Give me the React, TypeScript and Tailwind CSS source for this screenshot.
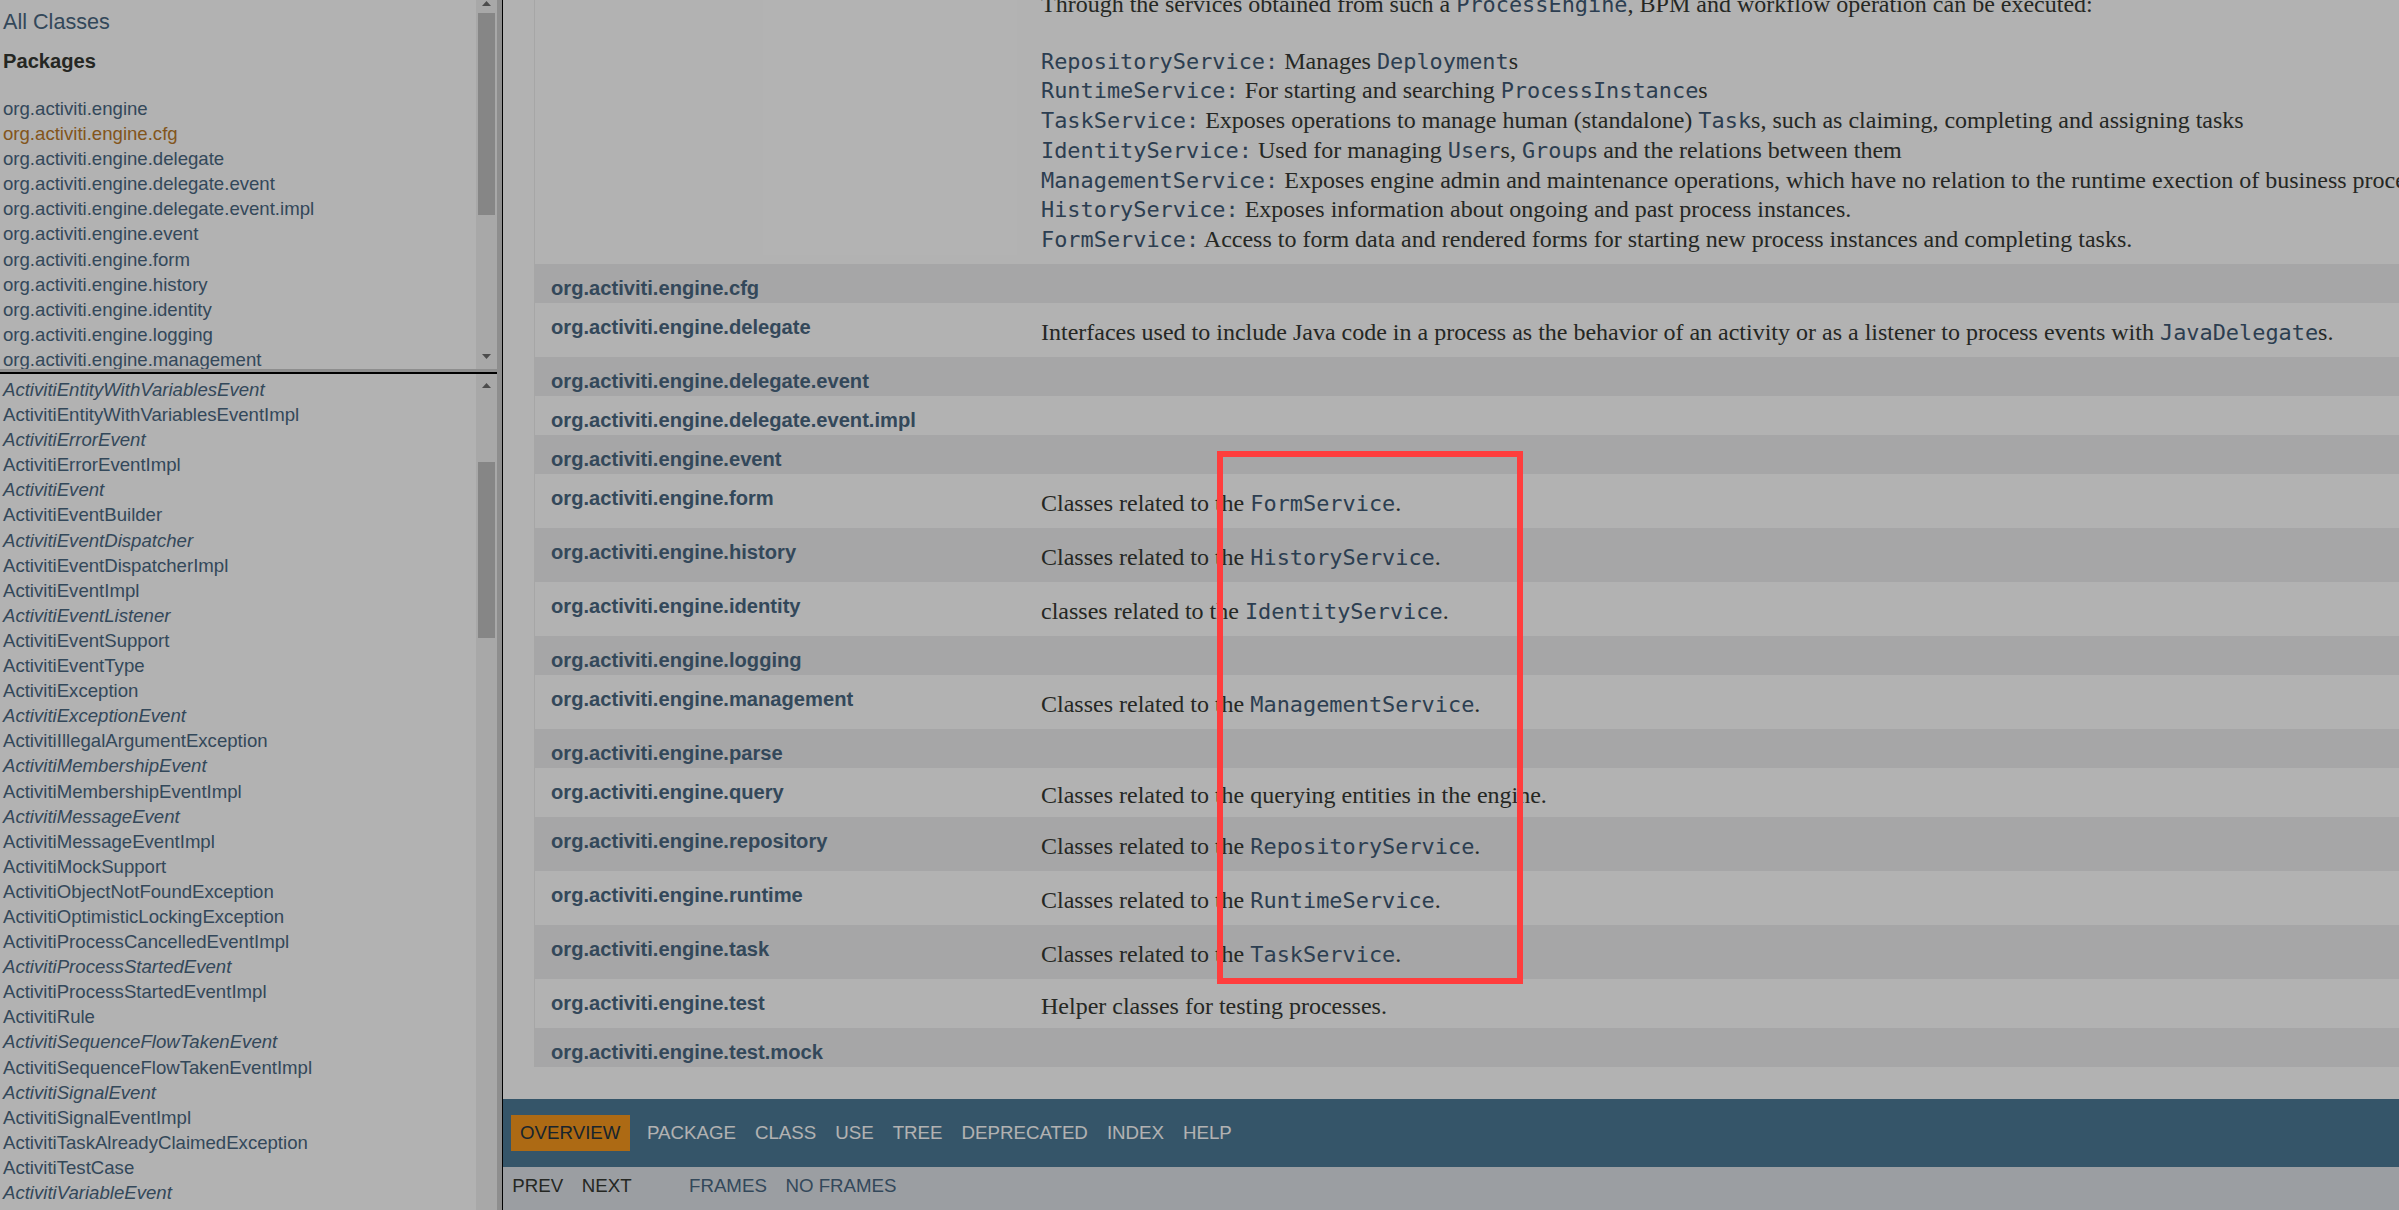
import type { ReactNode } from 'react';

const SANS = "font-['Liberation_Sans',Arial,sans-serif]";
const SERIF = "font-['Liberation_Serif','Times_New_Roman',serif]";

const packages = [
    'org.activiti.engine',
    'org.activiti.engine.cfg',
    'org.activiti.engine.delegate',
    'org.activiti.engine.delegate.event',
    'org.activiti.engine.delegate.event.impl',
    'org.activiti.engine.event',
    'org.activiti.engine.form',
    'org.activiti.engine.history',
    'org.activiti.engine.identity',
    'org.activiti.engine.logging',
    'org.activiti.engine.management',
];

// [name, isInterface]
const classes: [string, boolean][] = [
    ['ActivitiEntityWithVariablesEvent', true],
    ['ActivitiEntityWithVariablesEventImpl', false],
    ['ActivitiErrorEvent', true],
    ['ActivitiErrorEventImpl', false],
    ['ActivitiEvent', true],
    ['ActivitiEventBuilder', false],
    ['ActivitiEventDispatcher', true],
    ['ActivitiEventDispatcherImpl', false],
    ['ActivitiEventImpl', false],
    ['ActivitiEventListener', true],
    ['ActivitiEventSupport', false],
    ['ActivitiEventType', false],
    ['ActivitiException', false],
    ['ActivitiExceptionEvent', true],
    ['ActivitiIllegalArgumentException', false],
    ['ActivitiMembershipEvent', true],
    ['ActivitiMembershipEventImpl', false],
    ['ActivitiMessageEvent', true],
    ['ActivitiMessageEventImpl', false],
    ['ActivitiMockSupport', false],
    ['ActivitiObjectNotFoundException', false],
    ['ActivitiOptimisticLockingException', false],
    ['ActivitiProcessCancelledEventImpl', false],
    ['ActivitiProcessStartedEvent', true],
    ['ActivitiProcessStartedEventImpl', false],
    ['ActivitiRule', false],
    ['ActivitiSequenceFlowTakenEvent', true],
    ['ActivitiSequenceFlowTakenEventImpl', false],
    ['ActivitiSignalEvent', true],
    ['ActivitiSignalEventImpl', false],
    ['ActivitiTaskAlreadyClaimedException', false],
    ['ActivitiTestCase', false],
    ['ActivitiVariableEvent', true],
];

function Code({ children }: { children: ReactNode }) {
    return (
        <code className="font-['DejaVu_Sans_Mono','Liberation_Mono',monospace] text-[21.9px] leading-none text-[#3f5a74]">
            {children}
        </code>
    );
}

type RowKind = 'empty' | 'plain' | 'code';
type Row = { name: string; kind: RowKind; desc?: ReactNode };

const rowHeight: Record<RowKind, string> = {
    empty: 'h-[39px]',
    plain: 'h-[49px]',
    code: 'h-[54px]',
};

const descPad: Record<RowKind, string> = {
    empty: '',
    plain: 'pt-[12.6px]',
    code: 'pt-[14.8px]',
};

const rows: Row[] = [
    { name: 'org.activiti.engine.cfg', kind: 'empty' },
    {
        name: 'org.activiti.engine.delegate',
        kind: 'code',
        desc: <>Interfaces used to include Java code in a process as the behavior of an activity or as a listener to process events with <Code>JavaDelegate</Code>s.</>,
    },
    { name: 'org.activiti.engine.delegate.event', kind: 'empty' },
    { name: 'org.activiti.engine.delegate.event.impl', kind: 'empty' },
    { name: 'org.activiti.engine.event', kind: 'empty' },
    { name: 'org.activiti.engine.form', kind: 'code', desc: <>Classes related to the <Code>FormService</Code>.</> },
    { name: 'org.activiti.engine.history', kind: 'code', desc: <>Classes related to the <Code>HistoryService</Code>.</> },
    { name: 'org.activiti.engine.identity', kind: 'code', desc: <>classes related to the <Code>IdentityService</Code>.</> },
    { name: 'org.activiti.engine.logging', kind: 'empty' },
    { name: 'org.activiti.engine.management', kind: 'code', desc: <>Classes related to the <Code>ManagementService</Code>.</> },
    { name: 'org.activiti.engine.parse', kind: 'empty' },
    { name: 'org.activiti.engine.query', kind: 'plain', desc: <>Classes related to the querying entities in the engine.</> },
    { name: 'org.activiti.engine.repository', kind: 'code', desc: <>Classes related to the <Code>RepositoryService</Code>.</> },
    { name: 'org.activiti.engine.runtime', kind: 'code', desc: <>Classes related to the <Code>RuntimeService</Code>.</> },
    { name: 'org.activiti.engine.task', kind: 'code', desc: <>Classes related to the <Code>TaskService</Code>.</> },
    { name: 'org.activiti.engine.test', kind: 'plain', desc: <>Helper classes for testing processes.</> },
    { name: 'org.activiti.engine.test.mock', kind: 'empty' },
];

function Arrow({ up }: { up: boolean }) {
    return (
        <svg width="9" height="5" viewBox="0 0 9 5" className="block">
            <polygon points={up ? '0,5 4.5,0 9,5' : '0,0 9,0 4.5,5'} fill="#6e6e6e" />
        </svg>
    );
}

function TopScrollbar() {
    return (
        <div className="w-[21px] flex-none bg-[#f1f1f1] flex flex-col">
            <div className="h-[13px] flex justify-center pt-[1px]">
                <Arrow up />
            </div>
            <div className="mx-[2px] h-[202px] bg-[#c1c1c1]" />
            <div className="flex-1" />
            <div className="h-[16px] flex justify-center pt-[1px]">
                <Arrow up={false} />
            </div>
        </div>
    );
}

function BottomScrollbar() {
    return (
        <div className="w-[21px] flex-none bg-[#f1f1f1] flex flex-col">
            <div className="h-[21px] flex justify-center pt-[9px]">
                <Arrow up />
            </div>
            <div className="h-[67px]" />
            <div className="mx-[2px] h-[176px] bg-[#c1c1c1]" />
            <div className="flex-1" />
        </div>
    );
}

const navItems = ['PACKAGE', 'CLASS', 'USE', 'TREE', 'DEPRECATED', 'INDEX', 'HELP'];

export default function App() {
    return (
        <div className={`relative w-[2399px] h-[1210px] overflow-hidden flex bg-white ${SANS}`}>
            {/* left frames */}
            <div className="w-[497px] flex-none flex flex-col">
                <div className="h-[369px] flex-none flex overflow-hidden">
                    <div className="flex-1 min-w-0 overflow-hidden pl-[3px] pt-[9px]">
                        <div className="text-[21.6px] leading-[25px] text-[#4a6782]">All Classes</div>
                        <h2 className="mt-[15px] text-[20.15px] leading-[24px] font-bold text-[#353833]">Packages</h2>
                        <ul className="mt-[23px] text-[18.6px] leading-[25.1px]">
                            {packages.map(p => (
                                <li key={p} className={p === 'org.activiti.engine.cfg' ? 'text-[#bb7a2a]' : 'text-[#4a6782]'}>
                                    {p}
                                </li>
                            ))}
                        </ul>
                    </div>
                    <TopScrollbar />
                </div>
                <div className="h-[3px] flex-none bg-[#cccccc]" />
                <div className="h-[2px] flex-none bg-black" />
                <div className="flex-1 min-h-0 flex overflow-hidden">
                    <ul className="flex-1 min-w-0 overflow-hidden pl-[3px] pt-[3px] text-[18.6px] leading-[25.1px] text-[#4a6782]">
                        {classes.map(([name, isInterface]) => (
                            <li key={name} className={isInterface ? 'italic' : ''}>
                                {name}
                            </li>
                        ))}
                    </ul>
                    <BottomScrollbar />
                </div>
            </div>

            {/* frame divider */}
            <div className="w-[5px] flex-none bg-[#cccccc]" />
            <div className="w-px flex-none bg-black" />

            {/* right frame */}
            <div className="flex-1 min-w-0 h-full overflow-hidden bg-white">
                <div className="ml-[31px] w-[1990px] border-l border-[#eeeeee]">
                    <div className="flex bg-white">
                        <div className="w-[491px] flex-none" />
                        <div className={`pl-[15px] pb-[9.4px] text-[24px] leading-[29.7px] text-[#353833] whitespace-nowrap ${SERIF}`}>
                            <p className="-mt-[10px]">
                                Through the services obtained from such a <Code>ProcessEngine</Code>, BPM and workflow operation can be executed:
                            </p>
                            <ul className="mt-[27px]">
                                <li><Code>RepositoryService:</Code> Manages <Code>Deployment</Code>s</li>
                                <li><Code>RuntimeService:</Code> For starting and searching <Code>ProcessInstance</Code>s</li>
                                <li><Code>TaskService:</Code> Exposes operations to manage human (standalone) <Code>Task</Code>s, such as claiming, completing and assigning tasks</li>
                                <li><Code>IdentityService:</Code> Used for managing <Code>User</Code>s, <Code>Group</Code>s and the relations between them</li>
                                <li><Code>ManagementService:</Code> Exposes engine admin and maintenance operations, which have no relation to the runtime exection of business processes.</li>
                                <li><Code>HistoryService:</Code> Exposes information about ongoing and past process instances.</li>
                                <li><Code>FormService:</Code> Access to form data and rendered forms for starting new process instances and completing tasks.</li>
                            </ul>
                        </div>
                    </div>
                    {rows.map((row, i) => (
                        <div key={row.name} className={`flex ${rowHeight[row.kind]} ${i % 2 === 0 ? 'bg-[#eeeeef]' : 'bg-white'}`}>
                            <div className="w-[491px] flex-none pl-[16px] pt-[11.5px] text-[20.15px] leading-[24px] font-bold text-[#4a6782] whitespace-nowrap">
                                {row.name}
                            </div>
                            {row.desc && (
                                <div className={`pl-[15px] ${descPad[row.kind]} text-[24px] leading-[29.7px] text-[#353833] whitespace-nowrap ${SERIF}`}>
                                    {row.desc}
                                </div>
                            )}
                        </div>
                    ))}
                </div>

                {/* bottom nav */}
                <div className="mt-[32px] h-[68px] bg-[#4d7a97] pt-[15.5px]">
                    <ul className="flex text-[18.7px] leading-[21.4px] text-white">
                        <li className="mx-[7.75px] px-[9.3px] py-[7.75px] bg-[#f8981d] text-[#253441]">OVERVIEW</li>
                        {navItems.map(item => (
                            <li key={item} className="px-[9.5px] py-[7.75px]">{item}</li>
                        ))}
                    </ul>
                </div>
                <div className="h-[60px] bg-[#dee3e9] flex text-[18.7px] leading-[21.4px]">
                    <ul className="flex mr-[38.75px] text-[#353833]">
                        <li className="px-[9.3px] py-[7.75px]">PREV</li>
                        <li className="px-[9.3px] py-[7.75px]">NEXT</li>
                    </ul>
                    <ul className="flex text-[#4a6782]">
                        <li className="px-[9.3px] py-[7.75px]">FRAMES</li>
                        <li className="px-[9.3px] py-[7.75px]">NO FRAMES</li>
                    </ul>
                </div>
            </div>

            {/* dimming backdrop */}
            <div className="absolute inset-0 bg-black/30 pointer-events-none" />

            {/* highlight annotation */}
            <div className="absolute left-[1217px] top-[451px] w-[306px] h-[533px] border-[6px] border-[#ff3d3d] pointer-events-none" />
        </div>
    );
}
